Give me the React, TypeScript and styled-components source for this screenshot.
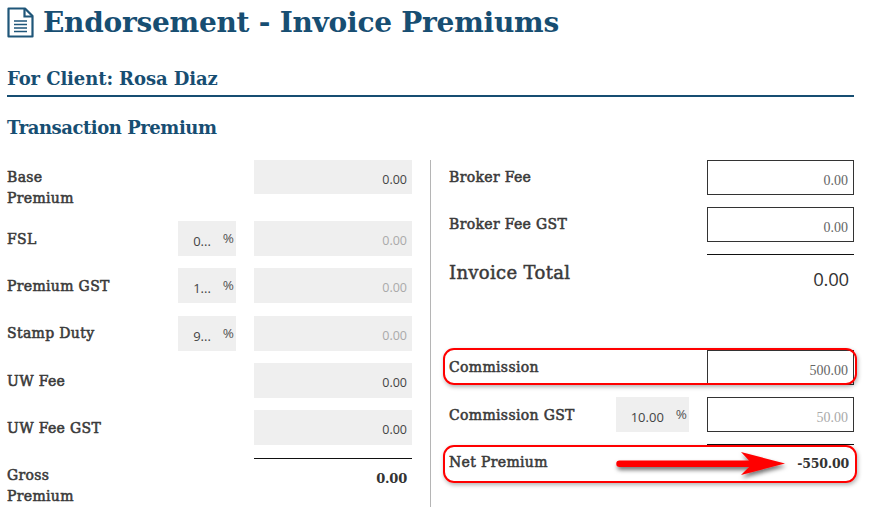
import React from "react";
import styled, { createGlobalStyle } from "styled-components";

const Global = createGlobalStyle`
  html, body { margin: 0; padding: 0; background: #fff; }
  body { font-family: "DejaVu Serif", "Liberation Serif", serif; color: #333; }
`;

const Page = styled.div`
  position: relative;
  width: 869px;
  height: 513px;
  overflow: hidden;
  padding: 0 15px 0 7px;
  box-sizing: border-box;
`;
const TitleRow = styled.div`
  display: flex;
  align-items: center;
  gap: 9px;
  height: 45px;
`;
const Title = styled.h1`
  margin: 0;
  font-size: 28px;
  line-height: 45px;
  font-weight: 700;
  letter-spacing: -0.25px;
  color: #174e72;
`;
const ClientHeading = styled.h2`
  margin: 22px 0 0;
  height: 28px;
  font-size: 18px;
  line-height: 24px;
  font-weight: 700;
  letter-spacing: -0.1px;
  color: #174e72;
  border-bottom: 2px solid #174e72;
`;
const SectionHeading = styled.h3`
  margin: 19px 0 0;
  height: 44px;
  font-size: 18px;
  line-height: 24px;
  font-weight: 700;
  letter-spacing: -0.45px;
  color: #174e72;
`;
const Columns = styled.div`
  display: flex;
  height: 347px;
`;
const LeftColumn = styled.div`
  width: 423px;
  border-right: 1px solid #b5b5b5;
  box-sizing: content-box;
`;
const RightColumn = styled.div`
  flex: 1;
  padding-left: 18px;
`;
const LeftRow = styled.div<{ $h?: number }>`
  display: grid;
  grid-template-columns: 171px 58px 18px 158px;
  height: ${(p) => p.$h ?? 47.33}px;
`;
const RightRow = styled.div<{ $h?: number }>`
  display: grid;
  grid-template-columns: 167px 73px 18px 147px;
  height: ${(p) => p.$h ?? 47}px;
`;
const Label = styled.div<{ $low?: boolean }>`
  grid-column: 1;
  padding-top: ${(p) => (p.$low ? 8 : 7)}px;
  font-size: 14px;
  line-height: 21px;
  font-weight: 400;
  letter-spacing: 0.34px;
  -webkit-text-stroke: 0.55px #3a3a3a;
  color: #3a3a3a;
  white-space: nowrap;
`;
const TotalLabel = styled(Label)`
  font-size: 18px;
  line-height: 24px;
  letter-spacing: 0.33px;
  -webkit-text-stroke: 0.5px #3a3a3a;
`;
const Amount = styled.div<{ $muted?: boolean; $h?: number }>`
  grid-column: 4;
  height: ${(p) => p.$h ?? 35}px;
  box-sizing: border-box;
  background: #efefef;
  padding: 11px 5px 0 0;
  text-align: right;
  font-family: "Open Sans", sans-serif;
  font-size: 12.5px;
  line-height: 17px;
  color: ${(p) => (p.$muted ? "#aaaaaa" : "#444444")};
`;
const BoxAmount = styled.div<{ $muted?: boolean }>`
  grid-column: 4;
  height: 35px;
  box-sizing: border-box;
  border: 1px solid #333;
  padding: 11px 5px 0 0;
  text-align: right;
  font-family: "Liberation Serif", serif;
  font-size: 14px;
  line-height: 17px;
  color: ${(p) => (p.$muted ? "#aaaaaa" : "#666666")};
`;
const Percent = styled.div`
  grid-column: 2;
  height: 35px;
  display: flex;
  justify-content: flex-end;
  background: #efefef;
  box-sizing: border-box;
  padding: 5px 2px 0 0;
  font-family: "Open Sans", sans-serif;
  font-size: 13px;
  color: #444;
`;
const PercentValue = styled.span`
  margin-top: 7px;
  margin-right: 12px;
  line-height: 17px;
`;
const PercentSign = styled.span`
  margin-top: 4px;
  line-height: 17px;
  font-size: 13.5px;
  color: #555;
`;
const Rule = styled.div`
  height: 1px;
  background: #111;
`;
const RuleCell = styled.div`
  grid-column: 4;
`;
const Sum = styled.div<{ $size: number; $weight: number; $top: number; $family?: string }>`
  margin-top: ${(p) => p.$top}px;
  margin-right: 5px;
  text-align: right;
  font-family: ${(p) => p.$family ?? '"DejaVu Serif", serif'};
  font-size: ${(p) => p.$size}px;
  font-weight: ${(p) => p.$weight};
  line-height: 20px;
  color: #333;
  letter-spacing: -0.2px;
`;
const Callout = styled.div<{ $top: number; $h: number }>`
  position: absolute;
  left: 443px;
  top: ${(p) => p.$top}px;
  width: 414px;
  height: ${(p) => p.$h}px;
  box-sizing: border-box;
  border: 2px solid #f00;
  border-radius: 11px;
  box-shadow: 1px 2px 4px rgba(0, 0, 0, 0.3);
  pointer-events: none;
`;
const ArrowSvg = styled.svg`
  position: absolute;
  left: 610px;
  top: 445px;
  overflow: visible;
`;

const FileIcon = () => (
  <svg width="27" height="31" viewBox="0 0 27 31" fill="none" stroke="#1f5679" strokeWidth="2.2">
    <path d="M1.5 1.5H18L25.5 9V29.5H1.5Z" strokeLinejoin="round" />
    <path d="M17.5 2V9.5H25" />
    <path d="M7 14H20M7 17.5H20M7 21H20M7 24.5H20" strokeWidth="1.7" />
  </svg>
);

const PctField = ({ v }: { v: string }) => (
  <Percent>
    <PercentValue>{v}</PercentValue>
    <PercentSign>%</PercentSign>
  </Percent>
);

export default function App() {
  return (
    <>
      <Global />
      <Page>
        <TitleRow>
          <FileIcon />
          <Title>Endorsement - Invoice Premiums</Title>
        </TitleRow>
        <ClientHeading>For Client: Rosa Diaz</ClientHeading>
        <SectionHeading>Transaction Premium</SectionHeading>
        <Columns>
          <LeftColumn>
            <LeftRow $h={61}>
              <Label>Base<br />Premium</Label>
              <Amount $h={34}>0.00</Amount>
            </LeftRow>
            <LeftRow>
              <Label $low>FSL</Label>
              <PctField v="0..." />
              <Amount $muted>0.00</Amount>
            </LeftRow>
            <LeftRow>
              <Label $low>Premium GST</Label>
              <PctField v="1..." />
              <Amount $muted>0.00</Amount>
            </LeftRow>
            <LeftRow>
              <Label>Stamp Duty</Label>
              <PctField v="9..." />
              <Amount $muted>0.00</Amount>
            </LeftRow>
            <LeftRow>
              <Label $low>UW Fee</Label>
              <Amount>0.00</Amount>
            </LeftRow>
            <LeftRow>
              <Label $low>UW Fee GST</Label>
              <Amount>0.00</Amount>
            </LeftRow>
            <LeftRow $h={50}>
              <Label>Gross<br />Premium</Label>
              <RuleCell>
                <Rule />
                <Sum $size={13} $weight={700} $top={10}>0.00</Sum>
              </RuleCell>
            </LeftRow>
          </LeftColumn>
          <RightColumn>
            <RightRow>
              <Label>Broker Fee</Label>
              <BoxAmount>0.00</BoxAmount>
            </RightRow>
            <RightRow>
              <Label>Broker Fee GST</Label>
              <BoxAmount>0.00</BoxAmount>
            </RightRow>
            <RightRow $h={96}>
              <TotalLabel>Invoice Total</TotalLabel>
              <RuleCell>
                <Rule />
                <Sum $size={18.5} $weight={400} $top={14} $family='"Open Sans", sans-serif'>0.00</Sum>
              </RuleCell>
            </RightRow>
            <RightRow>
              <Label>Commission</Label>
              <BoxAmount>500.00</BoxAmount>
            </RightRow>
            <RightRow>
              <Label $low>Commission GST</Label>
              <Percent>
                <PercentValue>10.00</PercentValue>
                <PercentSign>%</PercentSign>
              </Percent>
              <BoxAmount $muted>50.00</BoxAmount>
            </RightRow>
            <RightRow $h={40}>
              <Label $low>Net Premium</Label>
              <RuleCell>
                <Rule />
                <Sum $size={12.5} $weight={700} $top={9}>-550.00</Sum>
              </RuleCell>
            </RightRow>
          </RightColumn>
        </Columns>
        <Callout $top={348} $h={37} />
        <Callout $top={445} $h={38} />
        <ArrowSvg width="180" height="40" viewBox="0 0 180 40">
          <defs>
            <filter id="arrowShadow" x="-10%" y="-50%" width="120%" height="200%">
              <feDropShadow dx="1" dy="3" stdDeviation="2" floodColor="#000" floodOpacity="0.55" />
            </filter>
          </defs>
          <path
            d="M9.5 15.5H139L131 7L175 18.5L131 30L139 22H9.5A3.2 3.2 0 0 1 9.5 15.5Z"
            fill="#f00"
            filter="url(#arrowShadow)"
          />
        </ArrowSvg>
      </Page>
    </>
  );
}
